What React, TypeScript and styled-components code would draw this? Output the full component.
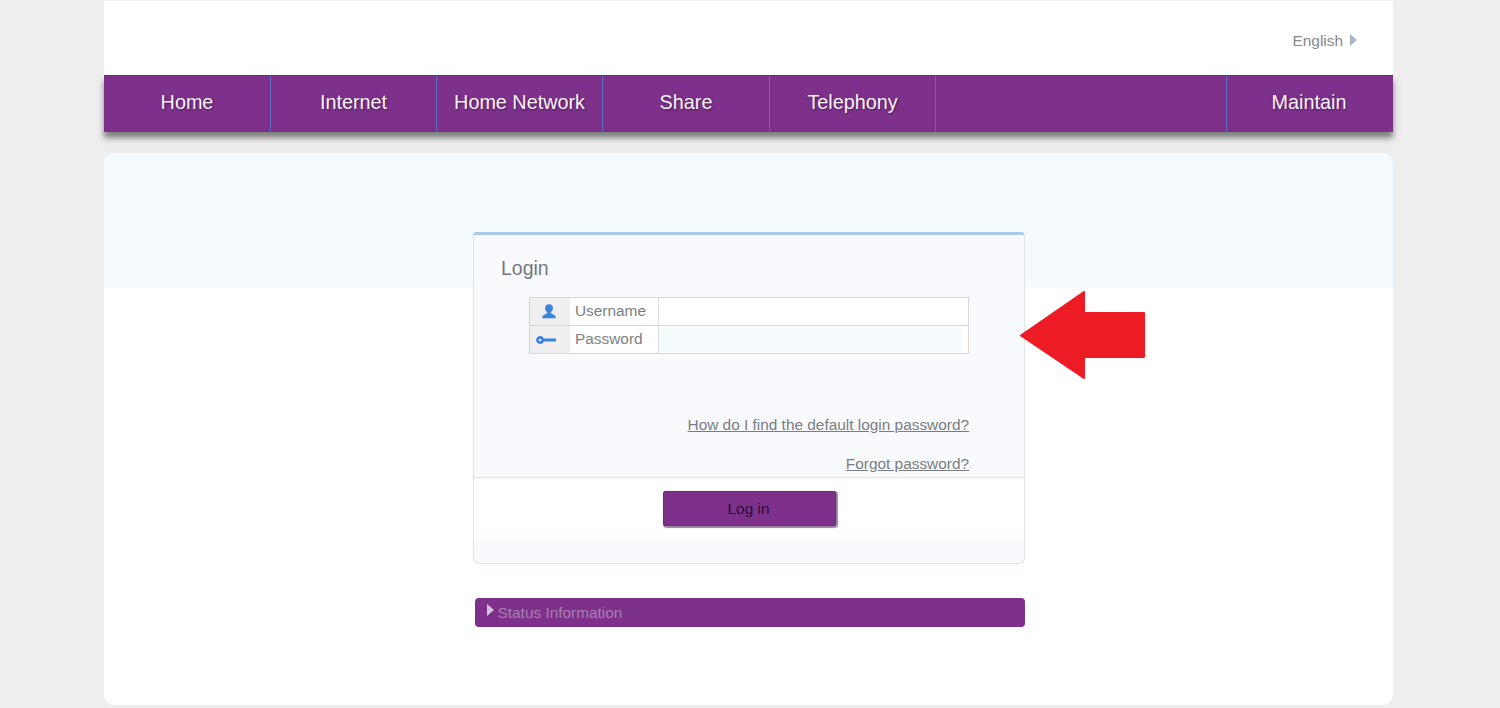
import React from 'react'
import styled, {createGlobalStyle} from 'styled-components'

const GlobalStyle = createGlobalStyle`
    html, body {
        margin: 0;
        height: 100%;
        background: #eeeeee;
        font-family: "Liberation Sans", Arial, sans-serif;
    }
`

const navItems = ['Home', 'Internet', 'Home Network', 'Share', 'Telephony']

export default function App () {
    return (
        <>
            <GlobalStyle />
            <Page>
                <TopBar>
                    <Language>English<LangCaret /></Language>
                </TopBar>
                <Nav>
                    {navItems.map(v => <NavItem key={v}>{v}</NavItem>)}
                    <NavSpacer />
                    <NavLast>Maintain</NavLast>
                </Nav>
                <Content>
                    <Card>
                        <CardBody>
                            <Title>Login</Title>
                            <Form>
                                <FormRow>
                                    <IconCell $shift={2}><UserIcon /></IconCell>
                                    <LabelCell>Username</LabelCell>
                                    <InputCell />
                                </FormRow>
                                <FormRow $last>
                                    <IconCell $shift={9}><KeyIcon /></IconCell>
                                    <LabelCell>Password</LabelCell>
                                    <InputCell><Autofill /></InputCell>
                                </FormRow>
                            </Form>
                            <Links>
                                <HelpLink href="#">How do I find the default login password?</HelpLink>
                                <HelpLink href="#">Forgot password?</HelpLink>
                            </Links>
                        </CardBody>
                        <CardFooter>
                            <LoginButton>Log in</LoginButton>
                        </CardFooter>
                        <CardBottom />
                        <RedArrow />
                    </Card>
                    <StatusBar>
                        <StatusCaret />
                        <StatusText>Status Information</StatusText>
                    </StatusBar>
                </Content>
            </Page>
        </>
    )
}

function UserIcon () {
    return (
        <svg width="16" height="15" viewBox="0 0 16 15">
            <circle cx="8" cy="4.2" r="3.9" fill="#3b82e0" />
            <path d="M6.2 7h3.6v1.6c0 .8 1 1.2 2.4 1.8 1.5.6 2.5 1.2 2.7 3.8H1.1c.2-2.6 1.2-3.2 2.7-3.8 1.4-.6 2.4-1 2.4-1.8z" fill="#3b82e0" />
        </svg>
    )
}

function KeyIcon () {
    return (
        <svg width="20" height="10" viewBox="0 0 20 10">
            <circle cx="4" cy="5" r="2.6" fill="none" stroke="#3b82e0" strokeWidth="2.6" />
            <rect x="7" y="3.5" width="13" height="3" fill="#3b82e0" />
        </svg>
    )
}

function RedArrow () {
    return (
        <ArrowSvg width="127" height="90" viewBox="0 0 127 90">
            <path d="M2 44.5 L65 1 V22 H125 V66 H65 V87 Z" fill="#ed1c24" stroke="#ed1c24" strokeWidth="2" strokeLinejoin="round" />
        </ArrowSvg>
    )
}

const Page = styled.div`
    width: 1289px;
    height: 708px;
    margin-left: 104px;
    display: flex;
    flex-direction: column;
`

const TopBar = styled.header`
    height: 74px;
    flex: none;
    background: #fff;
    border-top: 1px solid #f1f1f1;
    box-sizing: content-box;
    display: flex;
    justify-content: flex-end;
    padding-right: 36px;
`

const Language = styled.div`
    margin-top: 31px;
    height: 18px;
    display: flex;
    align-items: center;
    gap: 7px;
    font-size: 15.4px;
    color: #85888c;
`

const LangCaret = styled.span`
    width: 0;
    height: 0;
    margin-top: -3px;
    border-left: 7px solid #a9b4c2;
    border-top: 6px solid transparent;
    border-bottom: 6px solid transparent;
`

const Nav = styled.nav`
    height: 57px;
    flex: none;
    display: grid;
    grid-template-columns: 167px 166px 166px 167px 166px 291px 166px;
    background: #7d318a;
    border-top: 1px solid #6c2a78;
    box-sizing: border-box;
    box-shadow: 0 6px 6px rgba(80, 80, 80, 0.7);
    position: relative;
`

const NavItem = styled.div`
    box-sizing: border-box;
    border-right: 1px solid #5f6cc8;
    padding-bottom: 3px;
    display: flex;
    align-items: center;
    justify-content: center;
    font-size: 19.8px;
    color: #fdf3fd;
    text-shadow: 1px 1px 2px rgba(40, 10, 50, 0.55);
`

const NavSpacer = styled.div`
    border-right: 1px solid #5f6cc8;
`

const NavLast = styled(NavItem)`
    padding-right: 2px;
    border-right: none;
`

const Content = styled.main`
    margin-top: 21px;
    height: 552px;
    flex: none;
    box-sizing: border-box;
    padding-top: 79px;
    border-radius: 10px;
    background: linear-gradient(#f5faff 0, #f5faff 134px, #fff 134px);
    display: flex;
    flex-direction: column;
    align-items: center;
`

const Card = styled.section`
    width: 552px;
    height: 332px;
    margin-left: 1px;
    box-sizing: border-box;
    position: relative;
    display: flex;
    flex-direction: column;
    background: #f9fafd;
    border: 1px solid #e1e3e6;
    border-top: 3px solid #a9cbe6;
    border-radius: 4px 4px 6px 6px;
`

const CardBody = styled.div`
    height: 243px;
    flex: none;
    box-sizing: border-box;
    padding: 22px 55px 0 27px;
    border-bottom: 1px solid #e0e2e5;
`

const Title = styled.h2`
    margin: 0;
    font-size: 19.5px;
    line-height: 22px;
    font-weight: 400;
    color: #75787c;
`

const Form = styled.div`
    width: 440px;
    height: 57px;
    margin: 18px 0 0 28px;
    box-sizing: border-box;
    border: 1px solid #d4d6d8;
    background: #fff;
`

const FormRow = styled.div<{$last?: boolean}>`
    height: ${p => p.$last ? 27 : 28}px;
    box-sizing: border-box;
    display: flex;
    border-bottom: ${p => p.$last ? 'none' : '1px solid #d4d6d8'};
`

const IconCell = styled.div<{$shift: number}>`
    width: 40px;
    flex: none;
    box-sizing: border-box;
    padding-right: ${p => p.$shift}px;
    background: #efefef;
    display: flex;
    align-items: center;
    justify-content: center;
`

const LabelCell = styled.div`
    width: 89px;
    flex: none;
    box-sizing: border-box;
    padding: 0 0 2px 5px;
    border-right: 1px solid #dcdee0;
    display: flex;
    align-items: center;
    font-size: 15.4px;
    color: #7c7f83;
`

const InputCell = styled.div`
    flex: 1;
    display: flex;
`

const Autofill = styled.div`
    flex: 1;
    margin: 1px 6px 1px 0;
    background: #f6fbfe;
`

const Links = styled.div`
    margin-top: 62px;
    display: flex;
    flex-direction: column;
    align-items: flex-end;
    gap: 21px;
`

const HelpLink = styled.a`
    font-size: 15.4px;
    line-height: 18px;
    color: #7b7d82;
    text-decoration: underline;
`

const CardFooter = styled.div`
    height: 62px;
    flex: none;
    background: #fff;
    display: flex;
    justify-content: center;
    padding-top: 13px;
    box-sizing: border-box;
`

const LoginButton = styled.button`
    width: 173px;
    height: 35px;
    margin-left: 1px;
    padding: 0 2px 0 0;
    border: none;
    border-radius: 3px;
    background: #7d318a;
    box-shadow: inset 0 0 0 1px #6f2b7b, 1px 1px 1px 1px rgba(120, 90, 130, 0.75);
    font-family: inherit;
    font-size: 15.4px;
    color: #2a0a3c;
`

const CardBottom = styled.div`
    flex: 1;
`

const ArrowSvg = styled.svg`
    position: absolute;
    left: 545px;
    top: 56px;
`

const StatusBar = styled.div`
    width: 550px;
    height: 29px;
    margin: 34px 0 0 2px;
    box-sizing: border-box;
    padding-left: 12px;
    display: flex;
    align-items: center;
    gap: 4px;
    background: #7d318a;
    border-radius: 4px;
`

const StatusCaret = styled.span`
    width: 0;
    height: 0;
    margin-top: -5px;
    border-left: 7px solid #d3c4dc;
    border-top: 6px solid transparent;
    border-bottom: 6px solid transparent;
`

const StatusText = styled.span`
    font-size: 15.4px;
    color: #a77fb3;
`
